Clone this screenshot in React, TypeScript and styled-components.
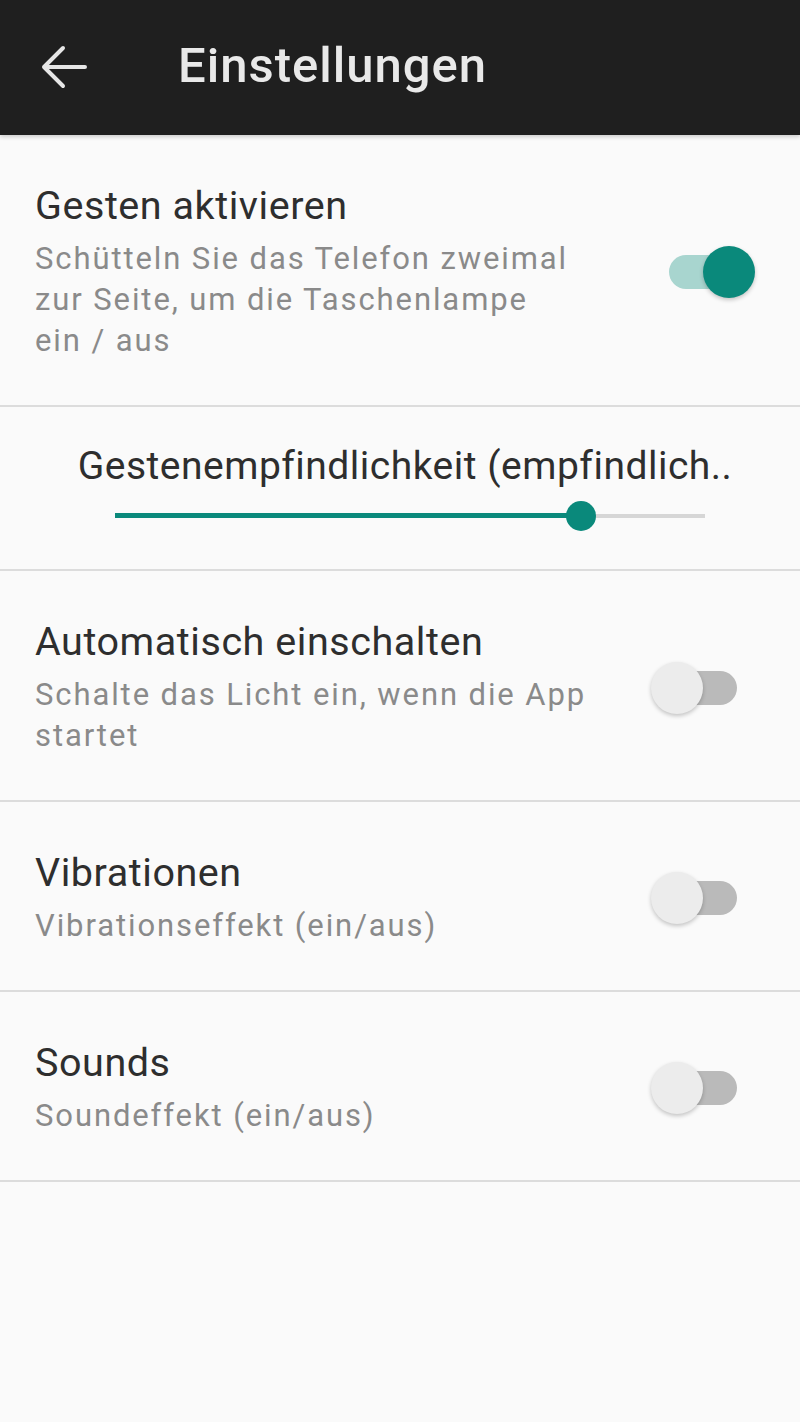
import React from 'react';
import styled, { createGlobalStyle } from 'styled-components';

const GlobalStyle = createGlobalStyle`
  html, body {
    margin: 0;
    padding: 0;
    background: #fafafa;
  }
  body {
    font-family: Roboto, 'Noto Sans', 'Liberation Sans', sans-serif;
  }
`;

const Screen = styled.div`
  width: 800px;
  min-height: 1422px;
  background: #fafafa;
`;

const AppBar = styled.header`
  height: 135px;
  background: #1f1f1f;
  display: flex;
  align-items: center;
  box-shadow: 0 2px 4px rgba(0, 0, 0, 0.18);
  position: relative;
  z-index: 1;
`;

const BackButton = styled.button`
  width: 130px;
  height: 100%;
  padding: 0 0 0 40px;
  border: none;
  background: transparent;
  display: flex;
  align-items: center;
  justify-content: flex-start;
  cursor: pointer;
`;

const AppTitle = styled.h1`
  margin: 0 0 0 48px;
  font-size: 49px;
  font-weight: 500;
  color: #e9e9e9;
  letter-spacing: 1px;
  padding-bottom: 4px;
`;

const List = styled.div`
  display: flex;
  flex-direction: column;
`;

const Row = styled.div`
  display: flex;
  align-items: center;
  justify-content: space-between;
  padding: 48px 43px 44px 35px;
  border-bottom: 2px solid #dcdcdc;
`;

const TextBlock = styled.div`
  display: flex;
  flex-direction: column;
  gap: 9px;
`;

const Title = styled.div`
  font-size: 39.5px;
  line-height: 46px;
  letter-spacing: 0.55px;
  color: #2e2e2e;
`;

const Summary = styled.div`
  font-size: 31px;
  line-height: 41px;
  letter-spacing: 1.9px;
  color: #8a8a8a;
`;

const SwitchBox = styled.div`
  position: relative;
  width: 106px;
  height: 54px;
  flex-shrink: 0;
`;

const Track = styled.div<{ $on: boolean }>`
  position: absolute;
  left: 18px;
  top: 10px;
  width: 68px;
  height: 34px;
  border-radius: 17px;
  background: ${(p) => (p.$on ? '#a8d5cf' : '#bababa')};
`;

const Thumb = styled.div<{ $on: boolean }>`
  position: absolute;
  top: 1px;
  left: ${(p) => (p.$on ? '52px' : '0')};
  width: 52px;
  height: 52px;
  border-radius: 50%;
  background: ${(p) => (p.$on ? '#0a897b' : '#ececec')};
  box-shadow: 0 2px 4px rgba(0, 0, 0, 0.22);
`;

const SliderSection = styled.div`
  display: flex;
  flex-direction: column;
  align-items: center;
  padding: 36px 0 38px;
  border-bottom: 2px solid #dcdcdc;
`;

const SliderLabel = styled.div`
  margin-left: 10px;
  font-size: 39px;
  line-height: 46px;
  letter-spacing: 0.5px;
  color: #2e2e2e;
  white-space: nowrap;
`;

const SliderTrack = styled.div`
  position: relative;
  margin: 12px 0 0 20px;
  width: 590px;
  height: 30px;
  display: flex;
  align-items: center;
`;

const SliderRail = styled.div`
  width: 100%;
  height: 4px;
  background: #d6d6d6;
`;

const SliderFill = styled.div`
  position: absolute;
  left: 0;
  top: 12px;
  height: 5px;
  background: #0a897b;
`;

const SliderKnob = styled.div`
  position: absolute;
  top: 0;
  width: 30px;
  height: 30px;
  margin-left: -15px;
  border-radius: 50%;
  background: #0a897b;
`;

const Toggle = ({ on }: { on: boolean }) => (
  <SwitchBox>
    <Track $on={on} />
    <Thumb $on={on} />
  </SwitchBox>
);

const settings = [
  {
    title: 'Automatisch einschalten',
    lines: ['Schalte das Licht ein, wenn die App', 'startet'],
    on: false,
  },
  { title: 'Vibrationen', lines: ['Vibrationseffekt (ein/aus)'], on: false },
  { title: 'Sounds', lines: ['Soundeffekt (ein/aus)'], on: false },
];

const sensitivity = 0.79;

const SettingRow = ({ title, lines, on }: { title: string; lines: string[]; on: boolean }) => (
  <Row>
    <TextBlock>
      <Title>{title}</Title>
      <Summary>
        {lines.map((l, i) => (
          <React.Fragment key={i}>
            {i > 0 && <br />}
            {l}
          </React.Fragment>
        ))}
      </Summary>
    </TextBlock>
    <Toggle on={on} />
  </Row>
);

export default function App() {
  return (
    <Screen>
      <GlobalStyle />
      <AppBar>
        <BackButton aria-label="Zurück">
          <svg width="50" height="50" viewBox="0 0 50 50">
            <path
              d="M4 24 H45 M23 5 L4 24 L23 43"
              fill="none"
              stroke="#e6e6e6"
              strokeWidth="4"
              strokeLinecap="round"
              strokeLinejoin="round"
            />
          </svg>
        </BackButton>
        <AppTitle>Einstellungen</AppTitle>
      </AppBar>
      <List>
        <SettingRow
          title="Gesten aktivieren"
          lines={['Schütteln Sie das Telefon zweimal', 'zur Seite, um die Taschenlampe', 'ein / aus']}
          on
        />
        <SliderSection>
          <SliderLabel>Gestenempfindlichkeit (empfindlich..</SliderLabel>
          <SliderTrack>
            <SliderRail />
            <SliderFill style={{ width: `${sensitivity * 100}%` }} />
            <SliderKnob style={{ left: `${sensitivity * 100}%` }} />
          </SliderTrack>
        </SliderSection>
        {settings.map((s) => (
          <SettingRow key={s.title} {...s} />
        ))}
      </List>
    </Screen>
  );
}
